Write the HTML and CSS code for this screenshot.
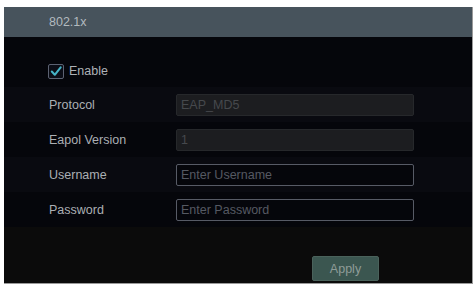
FILE: index.html
```html
<!DOCTYPE html>
<html>
<head>
<meta charset="utf-8">
<link rel="stylesheet" href="styles.css">
</head>
<body>
<div class="panel">
  <div class="header">802.1x</div>
  <div class="body">
    <div class="enable-row">
      <span class="checkbox">
        <svg width="15" height="15" viewBox="0 0 15 15"><path d="M3 7.5 L6.2 11 L12.5 3" fill="none" stroke="#45b3c6" stroke-width="2.2" stroke-linecap="round" stroke-linejoin="round"/></svg>
      </span>
      <span class="enable-label">Enable</span>
    </div>
    <div class="row band">
      <span class="label">Protocol</span>
      <div class="input disabled">EAP_MD5</div>
    </div>
    <div class="row">
      <span class="label">Eapol Version</span>
      <div class="input disabled">1</div>
    </div>
    <div class="row band">
      <span class="label">Username</span>
      <div class="input editable">Enter Username</div>
    </div>
    <div class="row">
      <span class="label">Password</span>
      <div class="input editable">Enter Password</div>
    </div>
  </div>
  <div class="footer">
    <button class="apply">Apply</button>
  </div>
</div>
</body>
</html>
```

FILE: styles.css
```css
html, body {
  margin: 0;
  padding: 0;
  background: #ffffff;
}
body {
  padding: 7px 0 0 4px;
  font-family: "Liberation Sans", Arial, sans-serif;
}
.panel {
  width: 468px;
  height: 276px;
  display: flex;
  flex-direction: column;
  background: #05060b;
  border-right: 1px solid #9a9a9a;
  border-bottom: 1px solid #9a9a9a;
}
.header {
  height: 30px;
  background: #47535c;
  color: #b2babf;
  font-size: 12.5px;
  line-height: 30px;
  padding-left: 45px;
}
.body {
  padding-top: 18px;
  background: #05060b;
}
.enable-row {
  height: 32px;
  display: flex;
  align-items: center;
  padding-left: 44px;
}
.checkbox {
  width: 16px;
  height: 15px;
  box-sizing: border-box;
  border: 1px solid #5c6272;
  border-radius: 2px;
  background: #0b0d16;
  display: flex;
  align-items: center;
  justify-content: center;
}
.checkbox svg {
  display: block;
}
.enable-label {
  margin-left: 5px;
  color: #aeb2b8;
  font-size: 12.5px;
}
.row {
  height: 35px;
  display: flex;
  align-items: center;
  padding-left: 45px;
}
.row.band {
  background: #090a10;
}
.label {
  width: 127px;
  color: #abafb4;
  font-size: 12.5px;
}
.input {
  width: 238px;
  height: 22px;
  box-sizing: border-box;
  border-radius: 2px;
  font-size: 12.5px;
  line-height: 20px;
  padding-left: 4px;
  white-space: nowrap;
}
.input.disabled {
  background: #1c1d20;
  border: 1px solid #26282b;
  color: #46494d;
}
.input.editable {
  background: #05060b;
  border: 1px solid #575b66;
  color: #555962;
}
.footer {
  flex: 1;
  background: #0b0b0b;
  display: flex;
  justify-content: flex-end;
  align-items: flex-end;
  padding: 0 93px 2px 0;
}
.apply {
  width: 67px;
  height: 25px;
  border: 1px solid #4a625b;
  border-radius: 2px;
  background: #3b5650;
  color: #8f9c98;
  font-family: "Liberation Sans", Arial, sans-serif;
  font-size: 12.5px;
  padding: 0;
}
```
